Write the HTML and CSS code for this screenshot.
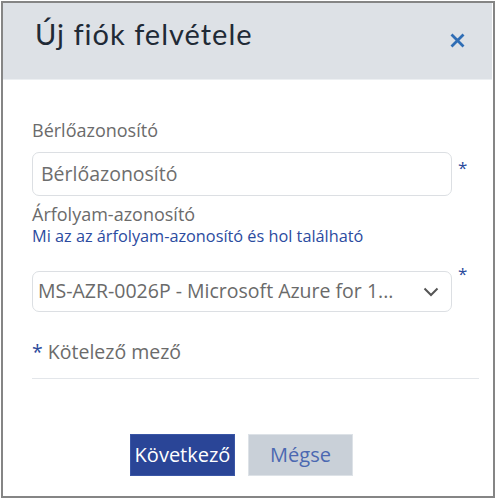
FILE: index.html
```html
<!DOCTYPE html>
<html lang="hu">
<head>
<meta charset="utf-8">
<title>Új fiók felvétele</title>
<link rel="stylesheet" href="styles.css">
</head>
<body>
<div class="dialog">
  <div class="header">
    <h1 class="title">Új fiók felvétele</h1>
    <button class="close" aria-label="Bezárás">
      <svg width="15" height="15" viewBox="0 0 15 15"><path d="M1.5 1.5 L13.5 13.5 M13.5 1.5 L1.5 13.5" stroke="#2f6db5" stroke-width="2.8" stroke-linecap="butt"/></svg>
    </button>
  </div>
  <div class="body">
    <div class="label label-first">Bérlőazonosító</div>
    <div class="field-row">
      <div class="input">Bérlőazonosító</div>
      <span class="req req-input">*</span>
    </div>
    <div class="label label-second">Árfolyam-azonosító</div>
    <a class="link">Mi az az árfolyam-azonosító és hol található</a>
    <div class="field-row select-row">
      <div class="select">
        <span class="select-text">MS-AZR-0026P - Microsoft Azure for 1...</span>
        <svg class="chev" width="16" height="10" viewBox="0 0 16 10"><path d="M1.5 1.5 L8 8 L14.5 1.5" fill="none" stroke="#555" stroke-width="2"/></svg>
      </div>
      <span class="req req-select">*</span>
    </div>
    <div class="required-note"><span class="req-note">*</span> Kötelező mező</div>
    <div class="divider"></div>
    <div class="buttons">
      <button class="btn btn-primary">Következő</button>
      <button class="btn btn-secondary">Mégse</button>
    </div>
  </div>
</div>
</body>
</html>
```
FILE: styles.css
```css
html, body {
  margin: 0;
  padding: 0;
  background: #ffffff;
}
body {
  width: 496px;
  height: 500px;
  overflow: hidden;
  font-family: "Open Sans", "Noto Sans", sans-serif;
}
.dialog {
  box-sizing: border-box;
  margin: 1px 0 0 1px;
  width: 494px;
  height: 497px;
  border: 2px solid #858585;
  background: #fff;
  display: flex;
  flex-direction: column;
}
.header {
  height: 76px;
  background: #dde1e6;
  border-bottom: 1px solid #eceff2;
  margin-right: 1px;
  display: flex;
  align-items: center;
  padding: 0 27px 0 32px;
  justify-content: space-between;
  flex-shrink: 0;
}
.title {
  margin: 0;
  font-family: "Lato", "Noto Sans", sans-serif;
  font-weight: 400;
  font-size: 29px;
  color: #1f2a36;
  letter-spacing: 1px;
  padding-bottom: 16px;
}
.close {
  border: 0;
  background: transparent;
  padding: 0;
  width: 15px;
  height: 15px;
  margin-top: -2px;
  display: flex;
}
.body {
  padding: 0 12px 0 29px;
  display: flex;
  flex-direction: column;
}
.label {
  font-size: 18px;
  color: #6b6b6b;
  line-height: 24px;
}
.label-first {
  margin-top: 38px;
}
.label-second {
  margin-top: 6px;
}
.field-row {
  display: flex;
  align-items: flex-start;
}
.input {
  box-sizing: border-box;
  width: 420px;
  height: 44px;
  margin-top: 10px;
  border: 1px solid #dcdfe3;
  border-radius: 7px;
  padding: 0 8px 2px;
  display: flex;
  align-items: center;
  font-size: 19.5px;
  color: #6e6e6e;
}
.req {
  color: #2c4a9c;
  font-size: 17px;
  line-height: 17px;
  margin-left: 6px;
}
.req-input {
  margin-top: 17px;
}
.link {
  font-size: 16.3px;
  color: #2b4ba0;
  line-height: 20px;
}
.select-row {
  margin-top: 25px;
}
.select {
  box-sizing: border-box;
  width: 420px;
  height: 41px;
  border: 1px solid #dcdfe3;
  border-radius: 7px;
  padding: 0 12px 2px 5px;
  display: flex;
  align-items: center;
  justify-content: space-between;
  font-size: 19.5px;
  color: #6a6a6a;
}
.chev {
  margin-top: 2px;
}
.req-select {
  margin-top: -6px;
}
.required-note {
  margin-top: 27px;
  font-size: 19.5px;
  color: #6b6b6b;
  line-height: 26px;
}
.req-note {
  color: #2c4a9c;
}
.divider {
  margin-top: 13px;
  height: 1px;
  width: 447px;
  background: #e3e6ea;
}
.buttons {
  margin-top: 55px;
  display: flex;
  gap: 13px;
  padding-left: 98px;
}
.btn {
  box-sizing: border-box;
  width: 105px;
  height: 42px;
  border: 1px solid transparent;
  font-family: "Open Sans", "Noto Sans", sans-serif;
  font-size: 20px;
  padding: 0 0 2px;
}
.btn-primary {
  background: #2a4597;
  color: #ffffff;
  border-color: #3a56a6;
}
.btn-secondary {
  background: #c9d0d8;
  color: #4b68b1;
  border-color: #dde2e7;
}
```
